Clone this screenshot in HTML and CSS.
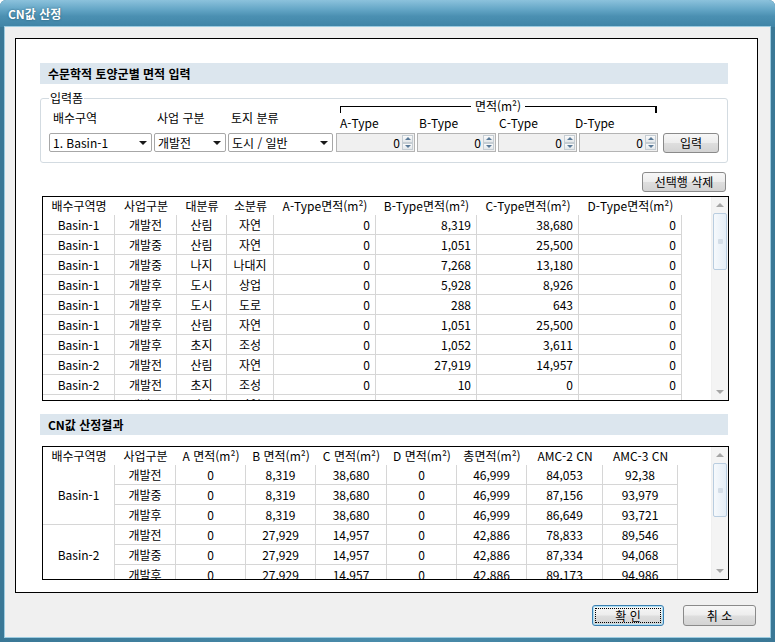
FILE: index.html
```html
<!DOCTYPE html>
<html lang="ko">
<head>
<meta charset="utf-8">
<title>CN값 산정</title>
<link rel="stylesheet" href="styles.css">
</head>
<body>
<div class="window">
  <div class="titlebar"><span class="title">CN값 산정</span></div>
  <div class="client">
    <div class="panel">
      <div class="sec-head">수문학적 토양군별 면적 입력</div>

      <fieldset class="group">
        <legend>입력폼</legend>
        <div class="form-grid">
          <div class="bracket"><span>면적(m²)</span></div>

          <div class="lbl l1">배수구역</div>
          <div class="lbl l2">사업 구분</div>
          <div class="lbl l3">토지 분류</div>
          <div class="lbl tl t-a">A-Type</div>
          <div class="lbl tl t-b">B-Type</div>
          <div class="lbl tl t-c">C-Type</div>
          <div class="lbl tl t-d">D-Type</div>

          <div class="combo"><span class="val">1. Basin-1</span><span class="arrow"></span></div>
          <div class="combo"><span class="val">개발전</span><span class="arrow"></span></div>
          <div class="combo w3"><span class="val">도시 / 일반</span><span class="arrow"></span></div>
          <div class="spin"><span class="num">0</span><span class="btns"><span class="sp up"></span><span class="sp dn"></span></span></div>
          <div class="spin"><span class="num">0</span><span class="btns"><span class="sp up"></span><span class="sp dn"></span></span></div>
          <div class="spin"><span class="num">0</span><span class="btns"><span class="sp up"></span><span class="sp dn"></span></span></div>
          <div class="spin"><span class="num">0</span><span class="btns"><span class="sp up"></span><span class="sp dn"></span></span></div>
          <div class="btn btn-input">입력</div>
        </div>
      </fieldset>

      <div class="btn btn-del">선택행 삭제</div>

      <div class="grid-box t1">
        <div class="grid-view">
          <div class="grid g1">
            <div class="h">배수구역명</div><div class="h">사업구분</div><div class="h">대분류</div><div class="h">소분류</div><div class="h">A-Type면적(m²)</div><div class="h">B-Type면적(m²)</div><div class="h">C-Type면적(m²)</div><div class="h">D-Type면적(m²)</div>

            <div class="c">Basin-1</div><div class="c">개발전</div><div class="c">산림</div><div class="c">자연</div><div class="c r">0</div><div class="c r">8,319</div><div class="c r">38,680</div><div class="c r">0</div>
            <div class="c">Basin-1</div><div class="c">개발중</div><div class="c">산림</div><div class="c">자연</div><div class="c r">0</div><div class="c r">1,051</div><div class="c r">25,500</div><div class="c r">0</div>
            <div class="c">Basin-1</div><div class="c">개발중</div><div class="c">나지</div><div class="c">나대지</div><div class="c r">0</div><div class="c r">7,268</div><div class="c r">13,180</div><div class="c r">0</div>
            <div class="c">Basin-1</div><div class="c">개발후</div><div class="c">도시</div><div class="c">상업</div><div class="c r">0</div><div class="c r">5,928</div><div class="c r">8,926</div><div class="c r">0</div>
            <div class="c">Basin-1</div><div class="c">개발후</div><div class="c">도시</div><div class="c">도로</div><div class="c r">0</div><div class="c r">288</div><div class="c r">643</div><div class="c r">0</div>
            <div class="c">Basin-1</div><div class="c">개발후</div><div class="c">산림</div><div class="c">자연</div><div class="c r">0</div><div class="c r">1,051</div><div class="c r">25,500</div><div class="c r">0</div>
            <div class="c">Basin-1</div><div class="c">개발후</div><div class="c">초지</div><div class="c">조성</div><div class="c r">0</div><div class="c r">1,052</div><div class="c r">3,611</div><div class="c r">0</div>
            <div class="c">Basin-2</div><div class="c">개발전</div><div class="c">산림</div><div class="c">자연</div><div class="c r">0</div><div class="c r">27,919</div><div class="c r">14,957</div><div class="c r">0</div>
            <div class="c">Basin-2</div><div class="c">개발전</div><div class="c">초지</div><div class="c">조성</div><div class="c r">0</div><div class="c r">10</div><div class="c r">0</div><div class="c r">0</div>
            <div class="c">Basin-2</div><div class="c">개발중</div><div class="c">산림</div><div class="c">자연</div><div class="c r">0</div><div class="c r">0</div><div class="c r">9,510</div><div class="c r">0</div>
          </div>
        </div>
        <div class="sb">
          <div class="sb-btn"><span class="tri-up"></span></div>
          <div class="sb-thumb th1"><span class="grip"></span></div>
          <div class="sb-track"></div>
          <div class="sb-btn"><span class="tri-dn"></span></div>
        </div>
      </div>

      <div class="sec-head sec2">CN값 산정결과</div>

      <div class="grid-box t2">
        <div class="grid-view">
          <div class="grid g2">
            <div class="h">배수구역명</div><div class="h">사업구분</div><div class="h">A 면적(m²)</div><div class="h">B 면적(m²)</div><div class="h">C 면적(m²)</div><div class="h">D 면적(m²)</div><div class="h">총면적(m²)</div><div class="h">AMC-2 CN</div><div class="h">AMC-3 CN</div>

            <div class="c span3">Basin-1</div>
            <div class="c">개발전</div><div class="c">0</div><div class="c">8,319</div><div class="c">38,680</div><div class="c">0</div><div class="c">46,999</div><div class="c">84,053</div><div class="c">92,38</div>
            <div class="c">개발중</div><div class="c">0</div><div class="c">8,319</div><div class="c">38,680</div><div class="c">0</div><div class="c">46,999</div><div class="c">87,156</div><div class="c">93,979</div>
            <div class="c">개발후</div><div class="c">0</div><div class="c">8,319</div><div class="c">38,680</div><div class="c">0</div><div class="c">46,999</div><div class="c">86,649</div><div class="c">93,721</div>

            <div class="c span3">Basin-2</div>
            <div class="c">개발전</div><div class="c">0</div><div class="c">27,929</div><div class="c">14,957</div><div class="c">0</div><div class="c">42,886</div><div class="c">78,833</div><div class="c">89,546</div>
            <div class="c">개발중</div><div class="c">0</div><div class="c">27,929</div><div class="c">14,957</div><div class="c">0</div><div class="c">42,886</div><div class="c">87,334</div><div class="c">94,068</div>
            <div class="c">개발후</div><div class="c">0</div><div class="c">27,929</div><div class="c">14,957</div><div class="c">0</div><div class="c">42,886</div><div class="c">89,173</div><div class="c">94,986</div>
          </div>
        </div>
        <div class="sb">
          <div class="sb-btn"><span class="tri-up"></span></div>
          <div class="sb-thumb th2"><span class="grip"></span></div>
          <div class="sb-track"></div>
          <div class="sb-btn"><span class="tri-dn"></span></div>
        </div>
      </div>
    </div>

    <div class="footer">
      <div class="btn btn-ok"><span class="focus">확 인</span></div>
      <div class="btn btn-cancel">취 소</div>
    </div>
  </div>
</div>
</body>
</html>
```

FILE: styles.css
```css
* { box-sizing: border-box; }

html, body {
  margin: 0;
  padding: 0;
}

body {
  width: 775px;
  height: 642px;
  overflow: hidden;
  background: #ffffff;
  font-family: "Noto Sans CJK KR", "Liberation Sans", sans-serif;
  font-size: 12px;
  color: #000;
}

.window {
  width: 775px;
  height: 642px;
  display: flex;
  flex-direction: column;
  background: linear-gradient(to right, #3a7896, #4a8cab 50%, #3a7896);
  border-radius: 6px 6px 0 0;
  overflow: hidden;
}

.titlebar {
  height: 27px;
  flex: none;
  display: flex;
  align-items: center;
  padding-left: 8px;
  background: linear-gradient(to bottom, #8cc2dc 0%, #64a6c6 35%, #4b90b2 60%, #3f84a6 100%);
}

.title {
  color: #fff;
  font-weight: bold;
  font-size: 12px;
  line-height: 14px;
  text-shadow: 0 0 2px rgba(20, 60, 80, 0.7);
}

.client {
  flex: 1;
  margin: 0 5px 5px 5px;
  background: #f0f0f0;
  box-shadow: 0 0 0 1px #9ccbe0;
  display: flex;
  flex-direction: column;
  padding: 11px 0 0 10px;
}

.panel {
  width: 743px;
  height: 555px;
  flex: none;
  border: 1px solid #000;
  background: #fff;
  display: flex;
  flex-direction: column;
  align-items: flex-start;
}

.sec-head {
  margin: 24px 0 0 24px;
  width: 688px;
  height: 21px;
  background: #dce6ee;
  font-weight: bold;
  line-height: 21px;
  padding-left: 8px;
}

.sec2 {
  margin-top: 13px;
}

/* group box */
.group {
  margin: 7px 0 0 24px;
  width: 688px;
  border: 1px solid #d3dbe1;
  border-radius: 3px;
  padding: 0 0 10px 8px;
  min-width: 0;
}

.group legend {
  padding: 0 1px;
  font-size: 12px;
  line-height: 14px;
}

.form-grid {
  display: grid;
  grid-template-columns: 103px 72px 106px 79px 79px 79px 79px 59px;
  grid-template-rows: 12px 21px 19px;
  column-gap: 2px;
  margin-top: -5px;
}

.bracket {
  grid-column: 4 / 8;
  grid-row: 1;
  display: flex;
  align-items: flex-start;
  margin: 0 1px 0 4px;
  line-height: 12px;
}

.bracket::before,
.bracket::after {
  content: "";
  flex: 1;
  height: 6px;
  margin-top: 6px;
  border-top: 1px solid #000;
}

.bracket::before { border-left: 1px solid #000; }
.bracket::after { border-right: 2px solid #000; }

.bracket span {
  padding: 0 4px;
}

.lbl {
  grid-row: 2;
  line-height: 12px;
  padding-left: 4px;
  white-space: nowrap;
}

.l1 { grid-column: 1; }
.l2 { grid-column: 2; padding-left: 3px; }
.l3 { grid-column: 3; padding-left: 3px; }

.tl { margin-top: 5px; }
.t-a { grid-column: 4; padding-left: 4px; }
.t-b { grid-column: 5; padding-left: 2px; }
.t-c { grid-column: 6; padding-left: 1px; }
.t-d { grid-column: 7; padding-left: 0; margin-left: -4px; }

.combo {
  grid-row: 3;
  height: 19px;
  border: 1px solid #a7a7a7;
  border-radius: 2px;
  background: #fff;
  display: flex;
  align-items: center;
  padding-left: 3px;
  line-height: 17px;
  white-space: nowrap;
}

.combo.w3 { width: 105px; }

.combo .val { flex: 1; }

.combo .arrow {
  width: 17px;
  height: 17px;
  display: flex;
  align-items: center;
  justify-content: center;
}

.combo .arrow::before {
  content: "";
  border-left: 4px solid transparent;
  border-right: 4px solid transparent;
  border-top: 4px solid #1a1a1a;
}

.spin {
  grid-row: 3;
  height: 19px;
  border: 1px solid #b4b4b4;
  background: #f0f0f0;
  display: flex;
}

.spin .num {
  flex: 1;
  text-align: right;
  line-height: 17px;
  padding-right: 2px;
}

.spin .btns {
  width: 12px;
  display: flex;
  flex-direction: column;
  padding: 1px 1px 1px 0;
}

.spin .sp {
  flex: 1;
  border: 1px solid #c5cdd3;
  background: linear-gradient(#fbfbfb, #e3e7ea);
  display: flex;
  align-items: center;
  justify-content: center;
}

.spin .up::before {
  content: "";
  border-left: 3px solid transparent;
  border-right: 3px solid transparent;
  border-bottom: 3px solid #5a7a98;
}

.spin .dn::before {
  content: "";
  border-left: 3px solid transparent;
  border-right: 3px solid transparent;
  border-top: 3px solid #5a7a98;
}

/* buttons */
.btn {
  border: 1px solid #8a8a8a;
  border-radius: 3px;
  background: linear-gradient(to bottom, #f7f7f7 0%, #ededed 48%, #dedede 52%, #d3d3d3 100%);
  display: flex;
  align-items: center;
  justify-content: center;
  font-size: 12px;
  line-height: 14px;
  white-space: nowrap;
}

.btn-input {
  grid-row: 3;
  grid-column: 8;
  height: 20px;
  margin-left: 3px;
}

.btn-del {
  align-self: flex-end;
  margin: 9px 31px 0 0;
  width: 84px;
  height: 20px;
}

/* grid tables */
.grid-box {
  margin-left: 26px;
  width: 687px;
  border: 1px solid #000;
  background: #fff;
  display: flex;
  flex: none;
}

.t1 {
  margin-top: 4px;
  height: 205px;
}

.t2 {
  margin-top: 11px;
  height: 134px;
}

.grid-view {
  flex: 1;
  overflow: hidden;
}

.grid {
  display: grid;
  grid-template-rows: 18px;
  grid-auto-rows: 20px;
}

.g1 {
  grid-template-columns: 72px 62px 50px 47px 102px 101px 102px 103px;
}

.g2 {
  grid-template-columns: 72px 61px 70px 70px 71px 70px 70px 76px 75px;
}

.h {
  line-height: 18px;
  text-align: center;
  white-space: nowrap;
}

.c {
  border-right: 1px solid #d6d6d6;
  border-bottom: 1px solid #d6d6d6;
  line-height: 19px;
  text-align: center;
  white-space: nowrap;
  overflow: hidden;
}

.c.r {
  text-align: right;
  padding-right: 5px;
}

.span3 {
  grid-row: span 3;
  display: flex;
  align-items: center;
  justify-content: center;
}

/* scrollbar */
.sb {
  width: 17px;
  flex: none;
  display: flex;
  flex-direction: column;
  background: #f4f4f4;
  border-left: 1px solid #f0f0f0;
}

.sb-btn {
  height: 16px;
  flex: none;
  display: flex;
  align-items: center;
  justify-content: center;
}

.tri-up {
  border-left: 4px solid transparent;
  border-right: 4px solid transparent;
  border-bottom: 4px solid #a6a6a6;
}

.tri-dn {
  border-left: 4px solid transparent;
  border-right: 4px solid transparent;
  border-top: 4px solid #a6a6a6;
}

.sb-thumb {
  flex: none;
  margin: 0 1px;
  border: 1px solid #b9cde0;
  border-radius: 2px;
  background: linear-gradient(to right, #f6f9fc, #e4edf6);
  display: flex;
  align-items: center;
  justify-content: center;
}

.th1 { height: 57px; }
.th2 { height: 54px; }

.grip {
  width: 5px;
  height: 5px;
  border-radius: 1px;
  background: #d3dde7;
}

.sb-track { flex: 1; }

/* footer */
.footer {
  display: flex;
  justify-content: flex-end;
  gap: 19px;
  margin: 12px 14px 0 0;
}

.btn-ok,
.btn-cancel {
  height: 21px;
  width: 72px;
}

.btn-cancel { width: 73px; }

.btn-ok {
  border-color: #3c7fb1;
  box-shadow: inset 0 0 0 1px #aee0f5;
  padding: 2px;
}

.btn-ok .focus {
  flex: 1;
  align-self: stretch;
  border: 1px dotted #000;
  display: flex;
  align-items: center;
  justify-content: center;
}
```
